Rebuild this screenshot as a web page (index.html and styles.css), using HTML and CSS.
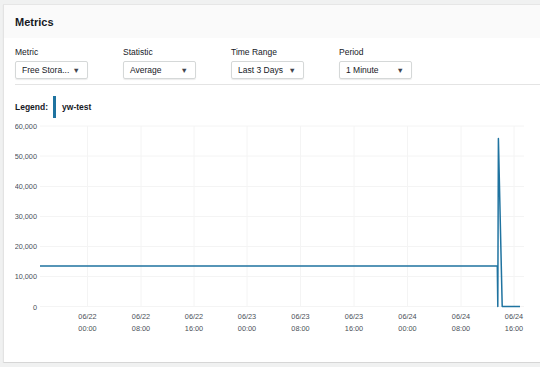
FILE: index.html
```html
<!DOCTYPE html>
<html>
<head>
    <title>Metrics</title>
    <meta charset="UTF-8">
    <meta name="viewport" content="width=device-width, initial-scale=1.0">
    <link rel="stylesheet" href="styles.css">
</head>
<body>
<div class="panel">
    <div class="panel-header">
        <h2>Metrics</h2>
    </div>
    <div class="panel-body">
        <div class="controls">
            <div class="field">
                <label>Metric</label>
                <div class="select"><span>Free Stora...</span><span class="caret">&#9660;</span></div>
            </div>
            <div class="field">
                <label>Statistic</label>
                <div class="select"><span>Average</span><span class="caret">&#9660;</span></div>
            </div>
            <div class="field">
                <label>Time Range</label>
                <div class="select"><span>Last 3 Days</span><span class="caret">&#9660;</span></div>
            </div>
            <div class="field">
                <label>Period</label>
                <div class="select"><span>1 Minute</span><span class="caret">&#9660;</span></div>
            </div>
        </div>
        <div class="legend">
            <span class="legend-label">Legend:</span>
            <span class="swatch"></span>
            <span class="series">yw-test</span>
        </div>
        <!-- chart drawn in page coordinates via the viewBox -->
        <svg class="chart" width="525" height="226" viewBox="15 118 525 226">
            <g class="grid">
                <line x1="40" y1="126" x2="524" y2="126"/>
                <line x1="40" y1="156" x2="524" y2="156"/>
                <line x1="40" y1="186.5" x2="524" y2="186.5"/>
                <line x1="40" y1="216.5" x2="524" y2="216.5"/>
                <line x1="40" y1="246.5" x2="524" y2="246.5"/>
                <line x1="40" y1="276.5" x2="524" y2="276.5"/>
                <line x1="40" y1="306.5" x2="524" y2="306.5"/>
                <line x1="87.5" y1="126" x2="87.5" y2="307"/>
                <line x1="141" y1="126" x2="141" y2="307"/>
                <line x1="194" y1="126" x2="194" y2="307"/>
                <line x1="247" y1="126" x2="247" y2="307"/>
                <line x1="300.5" y1="126" x2="300.5" y2="307"/>
                <line x1="354" y1="126" x2="354" y2="307"/>
                <line x1="407.5" y1="126" x2="407.5" y2="307"/>
                <line x1="461" y1="126" x2="461" y2="307"/>
                <line x1="514" y1="126" x2="514" y2="307"/>
            </g>
            <g class="y-labels">
                <text x="37" y="129">60,000</text>
                <text x="37" y="158.5">50,000</text>
                <text x="37" y="188.5">40,000</text>
                <text x="37" y="219">30,000</text>
                <text x="37" y="249">20,000</text>
                <text x="37" y="279">10,000</text>
                <text x="37" y="309.5">0</text>
            </g>
            <g class="x-labels">
                <text x="87.5" y="319">06/22</text><text x="87.5" y="331">00:00</text>
                <text x="141" y="319">06/22</text><text x="141" y="331">08:00</text>
                <text x="194" y="319">06/22</text><text x="194" y="331">16:00</text>
                <text x="247" y="319">06/23</text><text x="247" y="331">00:00</text>
                <text x="300.5" y="319">06/23</text><text x="300.5" y="331">08:00</text>
                <text x="354" y="319">06/23</text><text x="354" y="331">16:00</text>
                <text x="407.5" y="319">06/24</text><text x="407.5" y="331">00:00</text>
                <text x="461" y="319">06/24</text><text x="461" y="331">08:00</text>
                <text x="514" y="319">06/24</text><text x="514" y="331">16:00</text>
            </g>
            <polyline class="series-line" points="40,266 497.3,266 497.8,306.5 498.4,138.5 502.2,306.5 520,306.5"/>
        </svg>
    </div>
</div>
</body>
</html>
```
FILE: styles.css
```css
body {
  margin: 0;
  background: #f0f1f1;
  font-family: "Liberation Sans", Arial, sans-serif;
  color: #16191f;
}
.panel {
  margin: 4px 0 0 3px;
  background: #fff;
  border-top: 1px solid #e6e6e6;
  border-left: 1px solid #e3e3e3;
  border-bottom: 1px solid #d6d6d6;
  box-shadow: 0 1px 1px rgba(0, 0, 0, 0.08);
}
.panel-header {
  height: 33px;
  display: flex;
  align-items: center;
  padding-left: 11px;
  background: #fafafa;
}
.panel-header h2 {
  margin: 0;
  font-size: 11px;
  font-weight: bold;
}
.panel-body {
  padding: 0 0 18px 11px;
}
.controls {
  display: flex;
  gap: 35px;
  padding: 8px 0 5px;
  border-bottom: 1px solid #e4e4e4;
}
.field label {
  display: block;
  font-size: 8.5px;
  line-height: 12px;
  color: #16191f;
}
.select {
  margin-top: 3px;
  width: 73px;
  height: 18px;
  box-sizing: border-box;
  display: flex;
  align-items: center;
  justify-content: space-between;
  padding: 0 7px 0 6px;
  border: 1px solid #d5d8d8;
  border-radius: 2px;
  box-shadow: 0 1px 1px rgba(0, 0, 0, 0.08);
  font-size: 8.5px;
}
.caret {
  font-size: 7.5px;
  color: #3f454d;
}
.legend {
  display: flex;
  align-items: center;
  margin-top: 11px;
  height: 22px;
  font-size: 8.5px;
  font-weight: bold;
}
.swatch {
  width: 3px;
  height: 22px;
  margin: 0 6px 0 5px;
  background: #1f73a0;
}
.chart {
  display: block;
}
.grid line {
  stroke: #f4f4f4;
  stroke-width: 1;
}
.y-labels text {
  font-size: 7.3px;
  fill: #4a5058;
  text-anchor: end;
}
.x-labels text {
  font-size: 7.3px;
  fill: #4a5058;
  text-anchor: middle;
}
.series-line {
  fill: none;
  stroke: #1f73a0;
  stroke-width: 1.5;
  stroke-linejoin: round;
}
```
